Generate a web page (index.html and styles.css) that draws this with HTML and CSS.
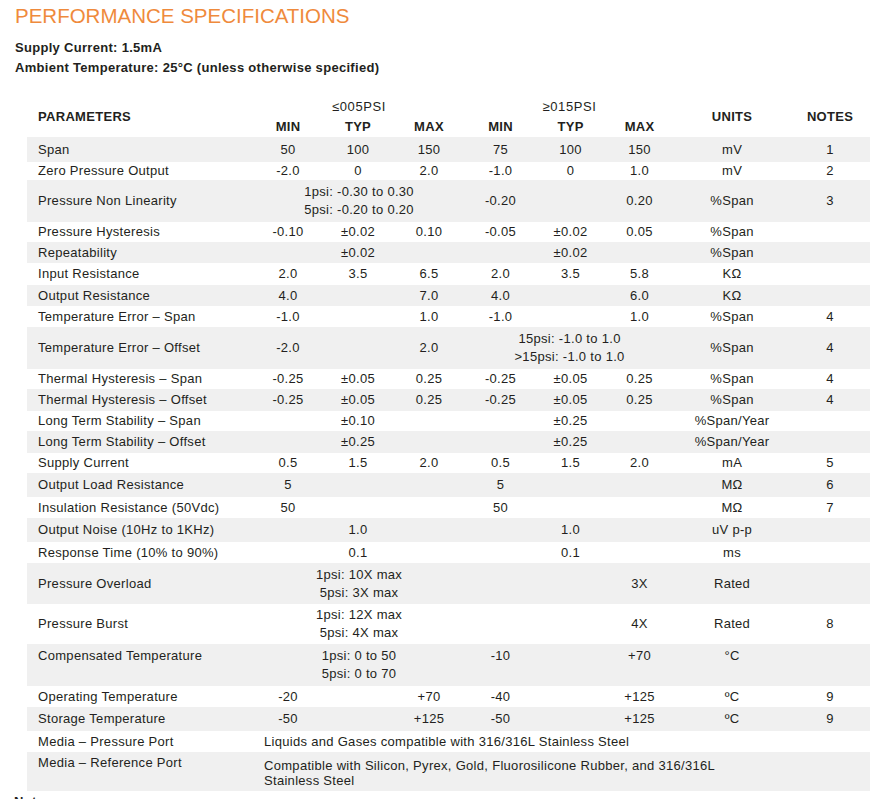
FILE: index.html
```html
<!DOCTYPE html>
<html>
<head>
<meta charset="utf-8">
<link rel="stylesheet" href="styles.css">
</head>
<body>
<h1 class="title">PERFORMANCE SPECIFICATIONS</h1>
<div class="conditions">
  <div>Supply Current: 1.5mA</div>
  <div>Ambient Temperature: 25°C (unless otherwise specified)</div>
</div>
<table class="specs">
  <colgroup>
    <col class="c-param"><col class="c70"><col class="c70"><col class="c72"><col class="c71"><col class="c69"><col class="c69"><col class="c-units"><col class="c-notes">
  </colgroup>
  <thead>
    <tr class="h-top">
      <th rowspan="2" class="param span2">PARAMETERS</th>
      <th colspan="3" class="group">≤005PSI</th>
      <th colspan="3" class="group">≥015PSI</th>
      <th rowspan="2" class="span2">UNITS</th>
      <th rowspan="2" class="span2">NOTES</th>
    </tr>
    <tr class="h-sub">
      <th>MIN</th><th>TYP</th><th>MAX</th>
      <th>MIN</th><th>TYP</th><th>MAX</th>
    </tr>
  </thead>
  <tbody>
    <tr class="g h25"><td class="param">Span</td><td>50</td><td>100</td><td>150</td><td>75</td><td>100</td><td>150</td><td>mV</td><td>1</td></tr>
    <tr class="h18"><td class="param">Zero Pressure Output</td><td>-2.0</td><td>0</td><td>2.0</td><td>-1.0</td><td>0</td><td>1.0</td><td>mV</td><td>2</td></tr>
    <tr class="g h42"><td class="param">Pressure Non Linearity</td><td colspan="3">1psi: -0.30 to 0.30<br>5psi: -0.20 to 0.20</td><td>-0.20</td><td></td><td>0.20</td><td>%Span</td><td>3</td></tr>
    <tr class="h20"><td class="param">Pressure Hysteresis</td><td>-0.10</td><td>±0.02</td><td>0.10</td><td>-0.05</td><td>±0.02</td><td>0.05</td><td>%Span</td><td></td></tr>
    <tr class="g h21"><td class="param">Repeatability</td><td></td><td>±0.02</td><td></td><td></td><td>±0.02</td><td></td><td>%Span</td><td></td></tr>
    <tr class="h22"><td class="param">Input Resistance</td><td>2.0</td><td>3.5</td><td>6.5</td><td>2.0</td><td>3.5</td><td>5.8</td><td>KΩ</td><td></td></tr>
    <tr class="g h21"><td class="param">Output Resistance</td><td>4.0</td><td></td><td>7.0</td><td>4.0</td><td></td><td>6.0</td><td>KΩ</td><td></td></tr>
    <tr class="h21"><td class="param">Temperature Error – Span</td><td>-1.0</td><td></td><td>1.0</td><td>-1.0</td><td></td><td>1.0</td><td>%Span</td><td>4</td></tr>
    <tr class="g h42"><td class="param">Temperature Error – Offset</td><td>-2.0</td><td></td><td>2.0</td><td colspan="3">15psi: -1.0 to 1.0<br>&gt;15psi: -1.0 to 1.0</td><td>%Span</td><td>4</td></tr>
    <tr class="h20"><td class="param">Thermal Hysteresis – Span</td><td>-0.25</td><td>±0.05</td><td>0.25</td><td>-0.25</td><td>±0.05</td><td>0.25</td><td>%Span</td><td>4</td></tr>
    <tr class="g h22"><td class="param">Thermal Hysteresis – Offset</td><td>-0.25</td><td>±0.05</td><td>0.25</td><td>-0.25</td><td>±0.05</td><td>0.25</td><td>%Span</td><td>4</td></tr>
    <tr class="h20"><td class="param">Long Term Stability – Span</td><td></td><td>±0.10</td><td></td><td></td><td>±0.25</td><td></td><td>%Span/Year</td><td></td></tr>
    <tr class="g h22"><td class="param">Long Term Stability – Offset</td><td></td><td>±0.25</td><td></td><td></td><td>±0.25</td><td></td><td>%Span/Year</td><td></td></tr>
    <tr class="h20"><td class="param">Supply Current</td><td>0.5</td><td>1.5</td><td>2.0</td><td>0.5</td><td>1.5</td><td>2.0</td><td>mA</td><td>5</td></tr>
    <tr class="g h24"><td class="param">Output Load Resistance</td><td>5</td><td></td><td></td><td>5</td><td></td><td></td><td>MΩ</td><td>6</td></tr>
    <tr class="h21"><td class="param">Insulation Resistance (50Vdc)</td><td>50</td><td></td><td></td><td>50</td><td></td><td></td><td>MΩ</td><td>7</td></tr>
    <tr class="g h24"><td class="param">Output Noise (10Hz to 1KHz)</td><td></td><td>1.0</td><td></td><td></td><td>1.0</td><td></td><td>uV p-p</td><td></td></tr>
    <tr class="h21"><td class="param">Response Time (10% to 90%)</td><td></td><td>0.1</td><td></td><td></td><td>0.1</td><td></td><td>ms</td><td></td></tr>
    <tr class="g h41"><td class="param">Pressure Overload</td><td colspan="3">1psi: 10X max<br>5psi: 3X max</td><td></td><td></td><td>3X</td><td>Rated</td><td></td></tr>
    <tr class="h40"><td class="param">Pressure Burst</td><td colspan="3">1psi: 12X max<br>5psi: 4X max</td><td></td><td></td><td>4X</td><td>Rated</td><td>8</td></tr>
    <tr class="g h42 top"><td class="param">Compensated Temperature</td><td colspan="3">1psi: 0 to 50<br>5psi: 0 to 70</td><td>-10</td><td></td><td>+70</td><td>°C</td><td></td></tr>
    <tr class="h21"><td class="param">Operating Temperature</td><td>-20</td><td></td><td>+70</td><td>-40</td><td></td><td>+125</td><td>ºC</td><td>9</td></tr>
    <tr class="g h24"><td class="param">Storage Temperature</td><td>-50</td><td></td><td>+125</td><td>-50</td><td></td><td>+125</td><td>ºC</td><td>9</td></tr>
    <tr class="h21"><td class="param">Media – Pressure Port</td><td colspan="8" class="media">Liquids and Gases compatible with 316/316L Stainless Steel</td></tr>
    <tr class="g h39 top media-row"><td class="param">Media – Reference Port</td><td colspan="8" class="media">Compatible with Silicon, Pyrex, Gold, Fluorosilicone Rubber, and 316/316L<br>Stainless Steel</td></tr>
  </tbody>
</table>
<div class="notes">Notes:</div>
</body>
</html>
```

FILE: styles.css
```css
html, body {
  margin: 0;
  padding: 0;
  background: #ffffff;
}

body {
  font-family: "Liberation Sans", Arial, sans-serif;
  color: #231f20;
  letter-spacing: 0.3px;
}

.title {
  margin: 4px 0 0 15px;
  font-size: 20.5px;
  line-height: 24px;
  font-weight: normal;
  color: #ef8a3c;
  letter-spacing: 0;
}

.conditions {
  margin: 10px 0 0 15px;
  font-size: 13px;
  line-height: 20px;
  font-weight: bold;
}

.specs {
  margin: 16px 0 0 27px;
  width: 843px;
  table-layout: fixed;
  border-collapse: collapse;
  border-spacing: 0;
  font-size: 13px;
  line-height: 18px;
}

.c-param { width: 226px; }
.c70 { width: 70px; }
.c72 { width: 72px; }
.c71 { width: 71px; }
.c69 { width: 69px; }
.c-units { width: 116px; }
.c-notes { width: 80px; }

.specs th,
.specs td {
  padding: 0;
  text-align: center;
  vertical-align: middle;
  white-space: nowrap;
}

.specs th {
  font-weight: bold;
}

.specs th.group {
  font-weight: normal;
  padding-top: 4px;
  letter-spacing: 0.6px;
}

.specs th.span2 {
  padding-top: 2px;
}

.specs th.param {
  text-align: left;
}

.specs .param {
  text-align: left;
  padding-left: 11px;
}

.h-top { height: 22px; }
.h-sub { height: 21px; }

.g { background: #f0f0f0; }

.h18 { height: 18px; }
.h20 { height: 20px; }
.h21 { height: 21px; }
.h22 { height: 22px; }
.h24 { height: 24px; }
.h25 { height: 25px; }
.h39 { height: 39px; }
.h40 { height: 40px; }
.h41 { height: 41px; }
.h42 { height: 42px; }

.top td {
  vertical-align: top;
  padding-top: 3px;
}

.specs td.media {
  text-align: left;
  padding-left: 11px;
}

.media-row td {
  padding-top: 2px;
}

.media-row td.media {
  line-height: 15px;
  padding-top: 6px;
}

.notes {
  margin: 2px 0 0 14px;
  font-size: 13px;
  line-height: 18px;
  font-weight: bold;
}
```
